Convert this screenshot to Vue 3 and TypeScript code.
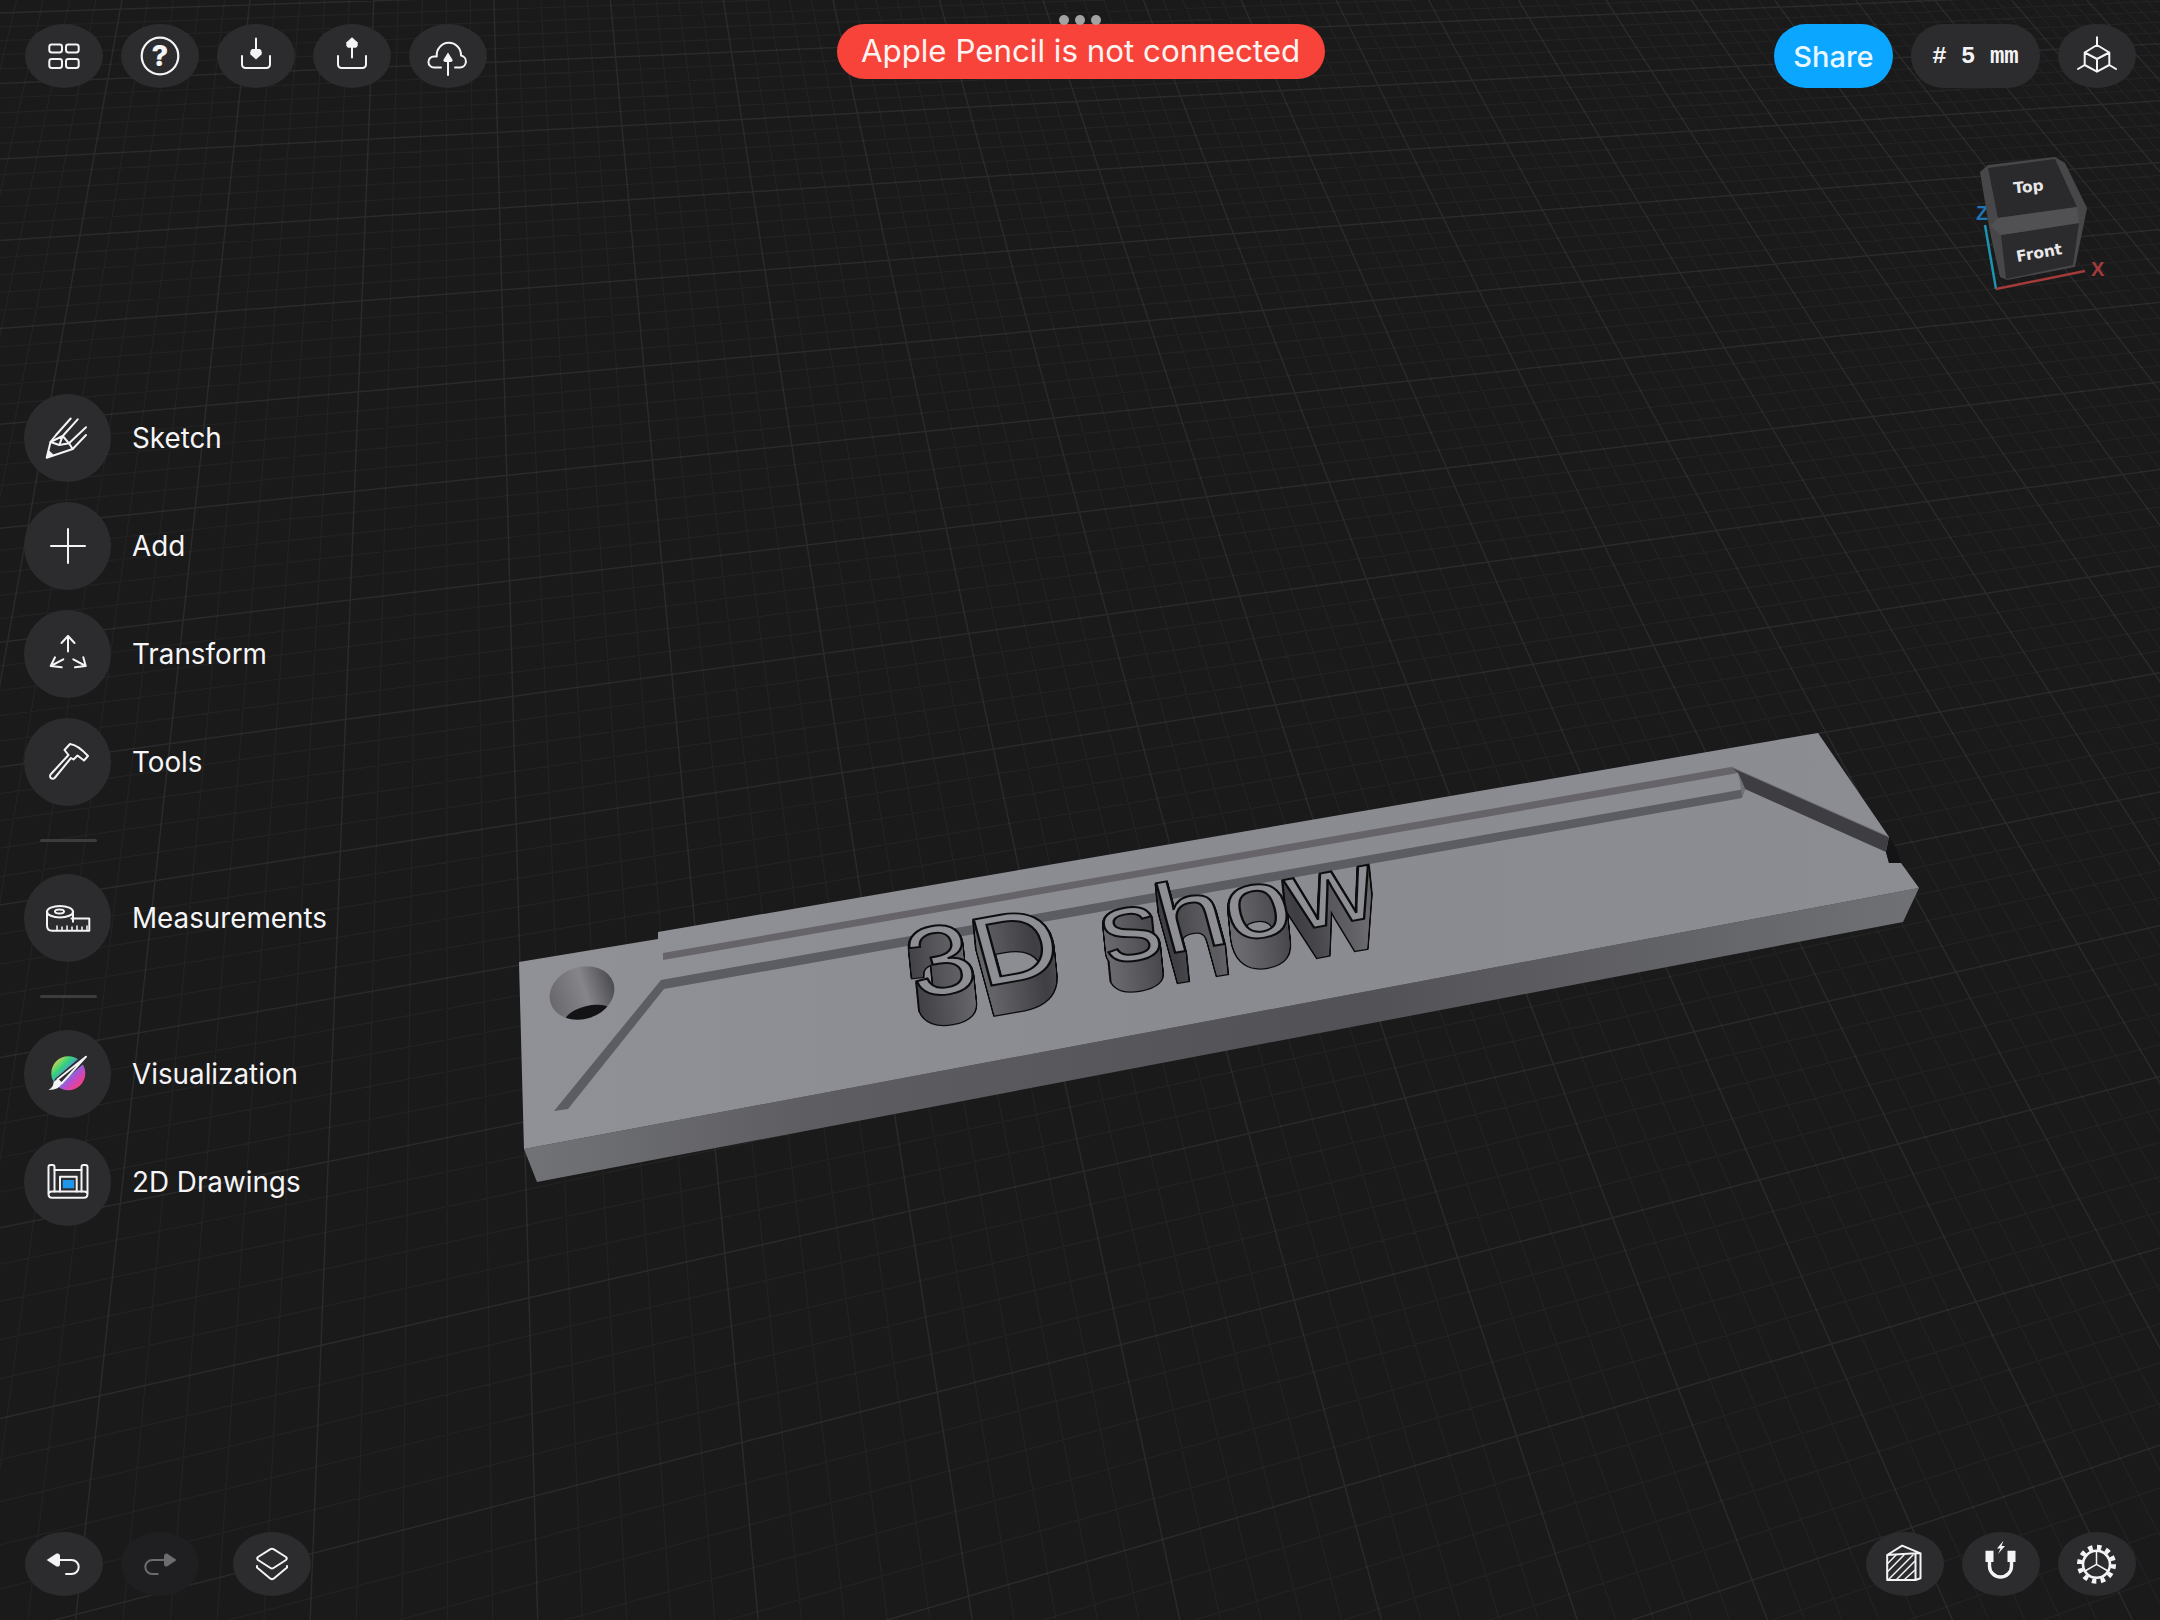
<template>
  <div class="app">
    <svg class="scene" viewBox="0 0 2160 1620" width="2160" height="1620">
      <defs>
        <linearGradient id="front" x1="0" x2="1" y1="0" y2="0">
          <stop offset="0" stop-color="#727377" />
          <stop offset="0.2" stop-color="#5e5e62" />
          <stop offset="0.6" stop-color="#525256" />
          <stop offset="1" stop-color="#707175" />
        </linearGradient>
        <linearGradient id="face" x1="0" x2="1" y1="0" y2="0">
          <stop offset="0" stop-color="#909197" />
          <stop offset="0.5" stop-color="#8a8b91" />
          <stop offset="1" stop-color="#8c8d93" />
        </linearGradient>
        <linearGradient id="hole-wall" x1="0" x2="1" y1="0" y2="0">
          <stop offset="0" stop-color="#69696d" />
          <stop offset="0.55" stop-color="#85858a" />
          <stop offset="1" stop-color="#4c4c50" />
        </linearGradient>
        <linearGradient id="wall" gradientUnits="userSpaceOnUse" x1="0" x2="55" y1="0" y2="0" spreadMethod="reflect">
          <stop offset="0" stop-color="#3f3f43" />
          <stop offset="1" stop-color="#6b6b70" />
        </linearGradient>
        <clipPath id="hole-clip">
          <ellipse cx="582" cy="993" rx="33" ry="26" transform="rotate(-18 582 993)" />
        </clipPath>
        <text id="plate-label" class="plate-text" x="0" y="0">3D show</text>
      </defs>

      <path :d="minorGrid" class="grid-minor" />
      <path :d="majorGrid" class="grid-major" />

      <!-- plate -->
      <polygon points="524,1149 1919,888 1903,922 537,1182" fill="url(#front)" />
      <polygon
        points="519,962 658,939 658,932 1818,733 1889,837 1886,852 1889,863 1901,863 1919,888 524,1149"
        fill="url(#face)"
      />
      <polygon points="1886,852 1889,837 1896,848 1901,863 1889,863" fill="#141416" />
      <polygon points="663,953 1731,767 1738,773 663,960" fill="#666469" />
      <polygon points="661,980 1745,789 1742,798 664,989 568,1109 554,1111" fill="#5c5d62" />
      <polygon points="1731,767 1889,837 1886,852 1745,789 1738,773" fill="#3e3e42" />
      <line x1="1731" y1="767" x2="1889" y2="837" stroke="#6e6f74" stroke-width="1" />
      <polygon points="1738,773 1745,789 1742,798 1740,782" fill="#707176" />

      <!-- key ring hole -->
      <ellipse cx="582" cy="993" rx="33" ry="26" transform="rotate(-18 582 993)" fill="url(#hole-wall)" />
      <g clip-path="url(#hole-clip)">
        <ellipse cx="588" cy="1015" rx="23" ry="9" transform="rotate(-14 588 1015)" fill="#131315" />
      </g>

      <!-- extruded label -->
      <g>
        <g v-for="d in depths" :key="'o' + d" :transform="`translate(${d * 0.1} ${d})`">
          <use href="#plate-label" :transform="labelMatrix" fill="#0d0d0f" stroke="#0d0d0f" stroke-width="2.6" />
        </g>
        <g v-for="d in depths" :key="'f' + d" :transform="`translate(${d * 0.1} ${d})`">
          <use href="#plate-label" :transform="labelMatrix" fill="url(#wall)" />
        </g>
        <use href="#plate-label" :transform="labelMatrix" fill="#8e8f95" stroke="#0d0d0f" stroke-width="2" />
      </g>

      <!-- view cube -->
      <line x1="1996" y1="289" x2="1985" y2="225" stroke="#1c93b4" stroke-width="2.5" />
      <text x="1976" y="220" class="axis axis-z">Z</text>
      <polygon
        points="1980,172 1988,165 2055,157 2065,163 2087,208 2083,228 2075,267 2007,280 2000,277 1990,232"
        fill="#47474a"
      />
      <polygon points="1988,168 2055,159 2077,207 1998,218" fill="#2a2a2c" />
      <polygon points="2001,235 2079,223 2073,265 2006,279" fill="#2b2b2d" />
      <polygon points="1998,218 2077,207 2079,223 2001,235 1990,226" fill="#515154" />
      <text class="cube-label" transform="translate(2029 192) rotate(-6)">Top</text>
      <text class="cube-label" transform="translate(2040 258) rotate(-10)">Front</text>
      <line x1="1996" y1="289" x2="2085" y2="271" stroke="#a43a3a" stroke-width="2.5" />
      <text x="2091" y="276" class="axis axis-x">X</text>
    </svg>

    <header class="top-bar">
      <div class="btn-row">
        <button class="round">
          <svg class="icon" viewBox="0 0 48 48">
            <rect x="9.3" y="12.5" width="12.7" height="8" rx="2.4" />
            <rect x="26" y="12.5" width="12.7" height="8" rx="2.4" />
            <rect x="9.3" y="27" width="12.7" height="9" rx="2.4" />
            <rect x="26" y="27" width="12.7" height="9" rx="2.4" />
          </svg>
        </button>
        <button class="round help">
          <svg class="icon icon-help" viewBox="0 0 48 48">
            <circle cx="24" cy="24" r="18.3" />
          </svg>
          <span class="help-mark">?</span>
        </button>
        <button class="round">
          <svg class="icon" viewBox="0 0 48 48">
            <path d="M24 6.5V18" />
            <path class="solid" d="M24 27.5l-5.5-5q-1-4 1.5-5.5h8q2.5 1.5 1.5 5.5z" />
            <path d="M10 24v8.5a3.5 3.5 0 0 0 3.5 3.5h21a3.5 3.5 0 0 0 3.5-3.5V24" />
          </svg>
        </button>
        <button class="round">
          <svg class="icon" viewBox="0 0 48 48">
            <path d="M24 14V25.5" />
            <path class="solid" d="M24 5.3l5.5 5q1 4-1.5 5.5h-8q-2.5-1.5-1.5-5.5z" />
            <path d="M10 24v8.5a3.5 3.5 0 0 0 3.5 3.5h21a3.5 3.5 0 0 0 3.5-3.5V24" />
          </svg>
        </button>
        <button class="round">
          <svg class="icon" viewBox="0 0 48 48">
            <path d="M31 35.5H36.2A6 6 0 0 0 37 23.6A12.15 12.15 0 1 0 12.8 24.4H10A5.5 5.5 0 0 0 10 35.5H17" />
            <path d="M24 28V43" />
            <path class="solid" d="M24 20.5l4.7 7.5q0 2-2 2h-5.4q-2 0-2-2z" />
          </svg>
        </button>
      </div>

      <div class="pencil">
        <div class="grabber"><i /><i /><i /></div>
        <div class="pencil-pill">Apple Pencil is not connected</div>
      </div>

      <div class="btn-row btn-row-right">
        <button class="share">Share</button>
        <button class="snap">#&nbsp;5&nbsp;mm</button>
        <button class="round">
          <svg class="icon" viewBox="0 0 48 48">
            <path d="M24 13L36.3 20.5V33L24 39.7L11.7 33V20.5ZM24 5.3V13M11.7 20.5L24 27L36.3 20.5M24 27V39.7M36.3 33L43 37M11.7 33L5 37" />
          </svg>
        </button>
      </div>
    </header>

    <nav class="side-menu">
      <template v-for="(group, i) in menu" :key="i">
        <div v-if="i > 0" class="divider" />
        <div v-for="item in group" :key="item" class="menu-item">
          <span class="menu-circle">
            <svg v-if="item === 'Sketch'" class="icon" viewBox="0 0 48 48">
              <path d="M6.5 28L12 21L26.7 4.5M18.7 22L33.7 5.3M25 29.3L42 13.3M28.7 35L42 21" />
              <path d="M2.7 43.7L6.5 28L18.7 22L25 29.3L28.7 35ZM6.5 28L15.3 31L18.7 22M15.3 31L25 29.3" />
              <path class="solid" d="M2.7 43.7L4.5 36L10 41Z" />
            </svg>
            <svg v-else-if="item === 'Add'" class="icon" viewBox="0 0 48 48">
              <path d="M7 24H41M24 7V41" />
            </svg>
            <svg v-else-if="item === 'Transform'" class="icon" viewBox="0 0 48 48">
              <path d="M24 6V21.5M17.5 13L24 6L30.5 13" />
              <path d="M19.3 29.3L6.7 36M11 27.3L6.7 36L17.7 37.3" />
              <path d="M29.3 29.3L41.7 36M39.3 27.3L41.7 36L31 37.3" />
            </svg>
            <svg v-else-if="item === 'Tools'" class="icon" viewBox="0 0 48 48">
              <path d="M6.8 36.2L24.5 17L20.5 12L26 6Q34 7 44 18L40 22.5L33.5 17.5L29.5 21.5L27 20L10.6 40A2.6 2.6 0 0 1 6.8 36.2Z" />
            </svg>
            <svg v-else-if="item === 'Measurements'" class="icon" viewBox="0 0 48 48">
              <ellipse cx="16" cy="17.7" rx="13" ry="5.7" />
              <ellipse cx="15.5" cy="17.5" rx="4.5" ry="2" />
              <path d="M3 17.7V31.5Q3 36.7 8 36.7H45.3V24.5H27.5M29 18V27.7" />
              <path class="thin" d="M13 36V32M18 36V33M23 36V32M28 36V33M33 36V32M38 36V33M43 36V32" />
            </svg>
            <svg v-else-if="item === 'Visualization'" class="icon" viewBox="0 0 48 48">
              <circle class="palette" cx="24.3" cy="23.3" r="17" fill="url(#palette)" />
              <defs>
                <linearGradient id="palette" x1="0" y1="0" x2="1" y2="1">
                  <stop offset="0.1" stop-color="#e8d14f" />
                  <stop offset="0.3" stop-color="#35d47a" />
                  <stop offset="0.48" stop-color="#4f8fdc" />
                  <stop offset="0.65" stop-color="#b64ed0" />
                  <stop offset="0.82" stop-color="#f0408e" />
                  <stop offset="1" stop-color="#e8794c" />
                </linearGradient>
              </defs>
              <path class="brush-gap" d="M42 7L14 31" />
              <path class="brush" d="M42 6.7L17.5 33.5L13.5 29.5Z" />
              <path class="solid" d="M13.5 29.5L17.5 33.5Q16 39.5 4.3 40Q9.5 37 9.5 32.5Q11 30 13.5 29.5Z" />
            </svg>
            <svg v-else class="icon" viewBox="0 0 48 48">
              <path d="M4.5 36V9Q4.5 7 6.5 7H8.5Q10.5 7 10.5 9V12H37.5V9Q37.5 7 39.5 7H41.5Q43.5 7 43.5 9V36M4.5 36Q4.5 39.7 8 39.7H40Q43.5 39.7 43.5 36Q43.5 33.5 40 33.5H8Q4.5 33.5 4.5 36Z" />
              <path d="M10.5 12V33.5M37.5 12V33.5M16 33.5V18.7H32.7V33.5" />
              <rect class="blue" x="18.7" y="22" width="11.5" height="8.3" />
            </svg>
          </span>
          <span class="menu-label">{{ item }}</span>
        </div>
      </template>
    </nav>

    <footer class="bottom-bar">
      <div class="btn-row">
        <button class="round">
          <svg class="icon" viewBox="0 0 48 48">
            <path d="M18 20H31.7A7 7 0 0 1 31.7 34H26" />
            <path class="solid" d="M6.7 20L16.5 13.5Q20 13 20 16V24Q20 27 16.5 26.5Z" />
          </svg>
        </button>
        <button class="round round-off">
          <svg class="icon icon-off" viewBox="0 0 48 48">
            <path d="M30 20H16.3A7 7 0 0 0 16.3 34H21.7" />
            <path class="solid" d="M40.7 20L31 13.5Q28 13 28 16V24Q28 27 31 26.5Z" />
          </svg>
        </button>
        <button class="round layers">
          <svg class="icon" viewBox="0 0 48 48">
            <path d="M22.5 9.2Q24 8.3 25.5 9.2L38 17Q39.5 18.5 38 20L25.5 28Q24 29 22.5 28L10 20Q8.5 18.5 10 17Z" />
            <path d="M9 26V27.5L22.5 38.7Q24 39.7 25.5 38.7L39 27.5V26" />
          </svg>
        </button>
      </div>
      <div class="btn-row">
        <button class="round">
          <svg class="icon" viewBox="0 0 48 48">
            <path d="M6.2 15L21.2 5.7L39.5 13.3V38.3L34.5 40H6.2ZM6.2 15L34.5 13.3L39.5 13.3M34.5 13.3V40" />
            <path class="thin" d="M6.2 24L15 15M6.2 32L23 15M8 39L32 15M16 39L34 21M24 39L34 30" />
          </svg>
        </button>
        <button class="round">
          <svg class="icon" viewBox="0 0 48 48">
            <path class="magnet" d="M12.5 17V26A11 11 0 0 0 34.5 26V17" />
            <path class="solid" d="M8.5 10.7H16.5V22H8.5ZM30.5 10.7H38.5V22H30.5Z" />
            <path class="solid" d="M26.5 0.7L20 8.5H23.5L21 14L28 6H24.5Z" />
          </svg>
        </button>
        <button class="round">
          <svg class="icon" viewBox="0 0 48 48">
            <circle class="gear-teeth" cx="23.5" cy="24.3" r="17" />
            <circle class="gear-ring" cx="23.5" cy="24.3" r="13.5" />
            <path class="thin" d="M23.5 24.3V11M23.5 24.3L12 31M23.5 24.3L35 31" />
          </svg>
        </button>
      </div>
    </footer>
  </div>
</template>

<script setup lang="ts">
// ground plane seen in perspective, vanishing points taken from the plate edges
const origin = { x: 520, y: 965 };
const vpU = { x: 7200, y: -225 };
const vpV = { x: 445, y: -1813 };
const wU = 0.0054;
const wV = 0.0107;

function project(u: number, v: number): { x: number; y: number } {
  const a = u * wU;
  const b = v * wV;
  const w = 1 + a + b;
  return {
    x: (origin.x + a * vpU.x + b * vpV.x) / w,
    y: (origin.y + a * vpU.y + b * vpV.y) / w,
  };
}

function lineU(u: number): string {
  const p = project(u, 0);
  const at = (y: number) => vpV.x + ((p.x - vpV.x) * (y - vpV.y)) / (p.y - vpV.y);
  const a = at(0);
  const b = at(1620);
  if (Math.max(a, b) < 0 || Math.min(a, b) > 2160) return '';
  return `M${a.toFixed(1)} 0L${b.toFixed(1)} 1620`;
}

function lineV(v: number): string {
  const p = project(0, v);
  const at = (x: number) => p.y + ((vpU.y - p.y) * (x - p.x)) / (vpU.x - p.x);
  const a = at(0);
  const b = at(2160);
  if (Math.max(a, b) < 0 || Math.min(a, b) > 1620) return '';
  return `M0 ${a.toFixed(1)}L2160 ${b.toFixed(1)}`;
}

let minorGrid = '';
let majorGrid = '';
for (let u = -80; u <= 300; u++) {
  if (u % 5 === 0) majorGrid += lineU(u);
  else minorGrid += lineU(u);
}
for (let v = -60; v <= 120; v++) {
  if (v % 5 === 0) majorGrid += lineV(v);
  else minorGrid += lineV(v);
}

const labelMatrix = 'matrix(1.17 -0.21 0.26 0.96 917 999)';
const depths = Array.from({ length: 30 }, (_, i) => 30 - i);

const menu: string[][] = [
  ['Sketch', 'Add', 'Transform', 'Tools'],
  ['Measurements'],
  ['Visualization', '2D Drawings'],
];
</script>

<style scoped>
.app {
  position: relative;
  width: 2160px;
  height: 1620px;
  overflow: hidden;
  background: #1a1a1b;
  font-family: Inter, 'Liberation Sans', sans-serif;
  color: #f5f5f7;
}

.scene {
  position: absolute;
  inset: 0;
  display: block;
}

.grid-minor {
  fill: none;
  stroke: rgba(255, 255, 255, 0.038);
  stroke-width: 1.2;
}

.grid-major {
  fill: none;
  stroke: rgba(255, 255, 255, 0.07);
  stroke-width: 1.5;
}

.plate-text {
  font-family: 'Liberation Sans', sans-serif;
  font-size: 100px;
  word-spacing: 8px;
}

.cube-label {
  font-family: 'DejaVu Sans', sans-serif;
  font-size: 15.5px;
  font-weight: 700;
  fill: #e8e8e8;
  text-anchor: middle;
}

.axis {
  font-family: 'Liberation Sans', sans-serif;
  font-size: 20px;
}

.axis-z {
  fill: #1f74b4;
  font-weight: 700;
}

.axis-x {
  fill: #a43a3a;
  font-weight: 700;
}

.top-bar {
  position: absolute;
  top: 24px;
  left: 25px;
  right: 24px;
  display: grid;
  grid-template-columns: 1fr auto 1fr;
  align-items: start;
}

.btn-row {
  display: flex;
  gap: 18px;
}

.btn-row-right {
  justify-content: flex-end;
}

button {
  border: none;
  padding: 0;
  margin: 0;
  color: inherit;
  font-family: inherit;
}

.round {
  position: relative;
  display: flex;
  align-items: center;
  justify-content: center;
  width: 78px;
  height: 64px;
  border-radius: 50%;
  background: #2c2c2e;
}

.round-off {
  background: #1f1f21;
}

.layers {
  margin-left: 16px;
}

.icon {
  display: block;
  width: 48px;
  height: 48px;
  fill: none;
  stroke: #f4f4f6;
  stroke-width: 2;
  stroke-linecap: round;
  stroke-linejoin: round;
}

.icon .solid {
  fill: #f4f4f6;
  stroke: none;
}

.icon .thin {
  stroke-width: 1.5;
}

.icon-off {
  stroke: #6c6c6e;
}

.icon-off .solid {
  fill: #6c6c6e;
}

.icon-help {
  stroke-width: 2.2;
}

.help-mark {
  position: absolute;
  left: 0;
  right: 0;
  top: 14px;
  text-align: center;
  font-size: 29px;
  line-height: 36px;
  font-weight: 800;
  color: #f4f4f6;
}

.pencil {
  position: relative;
}

.grabber {
  position: absolute;
  top: -9px;
  left: -1px;
  right: 0;
  display: flex;
  justify-content: center;
  gap: 6px;
}

.grabber i {
  width: 10px;
  height: 10px;
  border-radius: 50%;
  background: #a3a3a3;
}

.pencil-pill {
  width: 488px;
  height: 55px;
  border-radius: 28px;
  background: #f8433a;
  color: #fdf4f2;
  font-size: 31.3px;
  line-height: 54px;
  text-align: center;
}

.share {
  width: 119px;
  height: 64px;
  border-radius: 32px;
  background: #0aa6ff;
  color: #e8f7ff;
  font-size: 29px;
  font-weight: 500;
}

.snap {
  width: 129px;
  height: 64px;
  border-radius: 32px;
  background: #2c2c2e;
  color: #f4f4f6;
  font-family: 'Liberation Mono', monospace;
  font-size: 24px;
  font-weight: 700;
}

.side-menu {
  position: absolute;
  top: 394px;
  left: 24px;
  display: flex;
  flex-direction: column;
  gap: 20px;
}

.menu-item {
  display: flex;
  align-items: center;
  gap: 21px;
  height: 88px;
}

.menu-circle {
  display: flex;
  align-items: center;
  justify-content: center;
  width: 87px;
  height: 88px;
  border-radius: 50%;
  background: #2c2c2e;
}

.menu-label {
  font-size: 27.8px;
  line-height: 34px;
  color: #f5f5f7;
}

.divider {
  width: 57px;
  height: 3px;
  margin: 13px 0 12px 16px;
  border-radius: 2px;
  background: #3c3c3e;
}

.palette {
  stroke: none;
}

.brush-gap {
  stroke: #2c2c2e;
  stroke-width: 7;
}

.brush {
  fill: #2c2c2e;
}

.blue {
  fill: #1e96ea;
  stroke: none;
}

.magnet {
  stroke-width: 3.4;
  stroke-linecap: butt;
}

.gear-teeth {
  stroke-width: 5;
  stroke-dasharray: 4.45 4.45;
  stroke-linecap: butt;
}

.gear-ring {
  stroke-width: 2.6;
}

.bottom-bar {
  position: absolute;
  left: 25px;
  right: 24px;
  bottom: 24px;
  display: flex;
  justify-content: space-between;
}
</style>
